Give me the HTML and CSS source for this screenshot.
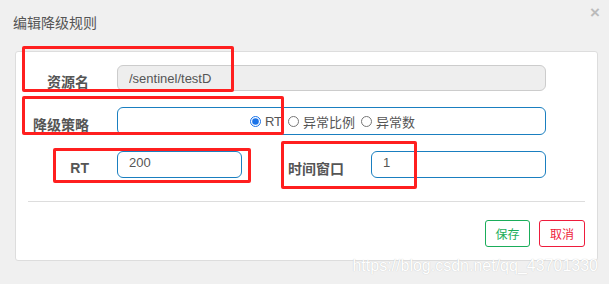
FILE: index.html
```html
<!DOCTYPE html>
<html lang="zh">
<head>
<meta charset="UTF-8" />
<title>编辑降级规则</title>
<link rel="stylesheet" href="styles.css">
</head>
<body>

<div class="dialog">
  <div class="dialog-head">
    <span class="dialog-title">编辑降级规则</span>
    <span class="close">×</span>
  </div>

  <div class="panel">
    <div class="row">
      <label class="label">资源名</label>
      <input class="input input-wide" type="text" value="/sentinel/testD" disabled />
    </div>

    <div class="row">
      <label class="label">降级策略</label>
      <div class="radio-box">
        <label class="radio"><input type="radio" name="grade" checked /> RT</label>
        <label class="radio"><input type="radio" name="grade" /> 异常比例</label>
        <label class="radio"><input type="radio" name="grade" /> 异常数</label>
      </div>
    </div>

    <div class="row">
      <label class="label">RT</label>
      <input class="input input-short" type="text" value="200" />
      <label class="label label-second">时间窗口</label>
      <input class="input input-mid" type="text" value="1" />
    </div>

    <div class="divider"></div>

    <div class="buttons">
      <button class="btn btn-save">保存</button>
      <button class="btn btn-cancel">取消</button>
    </div>
  </div>
</div>

<!-- красные рамки поверх скриншота -->
<div class="mark mark-1"></div>
<div class="mark mark-2"></div>
<div class="mark mark-3"></div>
<div class="mark mark-4"></div>

<div class="watermark">https://blog.csdn.net/qq_43701330</div>

</body>
</html>
```

FILE: styles.css
```css
* {
    margin: 0;
    padding: 0;
    box-sizing: border-box;
}

body {
    font-family: 'Liberation Sans', 'Noto Sans CJK SC', sans-serif;
    background: #f0f0f0;
    width: 609px;
    height: 284px;
    position: relative;
    overflow: hidden;
}

/* Заголовок диалога */
.dialog-head {
    height: 51px;
    display: flex;
    justify-content: space-between;
    align-items: flex-start;
    padding: 14px 9px 0 13px;
}
.dialog-title {
    font-size: 14px;
    color: #555;
    line-height: 18px;
}
.close {
    font-size: 17px;
    font-weight: bold;
    color: #bbb;
    line-height: 12px;
    margin-top: -7px;
}

/* Панель формы */
.panel {
    margin-left: 15px;
    width: 583px;
    height: 210px;
    background: #fff;
    border: 1px solid #ddd;
    border-radius: 3px;
    padding-top: 13px;
}
.row {
    display: flex;
    align-items: center;
    margin-bottom: 16px;
}
.label {
    width: 73px;
    text-align: right;
    font-size: 14px;
    font-weight: bold;
    color: #555;
    padding-top: 6px;
    margin-right: 28px;
}
.label-second {
    width: 102px;
    margin-right: 27px;
}
.input {
    height: 27px;
    border: 1px solid #1a7fc0;
    border-radius: 6px;
    padding: 0 11px 4px;
    font-family: 'Liberation Sans', sans-serif;
    font-size: 13px;
    color: #555;
    background: #fff;
    outline: none;
}
.input-wide {
    width: 429px;
    height: 26px;
    background: #eee;
    border-color: #ccc;
    color: #555;
    padding-bottom: 0;
}
.input-short {
    width: 125px;
}
.input-mid {
    width: 175px;
}

.radio-box {
    width: 429px;
    height: 28px;
    border: 1px solid #1a7fc0;
    border-radius: 6px;
    display: flex;
    justify-content: center;
    align-items: center;
    gap: 6px;
    padding-left: 2px;
}
.radio {
    font-size: 13px;
    color: #555;
    display: flex;
    align-items: center;
    font-weight: normal;
}
.radio input {
    width: 11px;
    height: 11px;
    margin: 0 4px 0 0;
    accent-color: #1a73e8;
}

/* margin-top схлопывается с отступом последней строки */
.divider {
    margin: 23px 12px 0 12px;
    border-top: 1px solid #ddd;
}

.buttons {
    display: flex;
    justify-content: flex-end;
    gap: 9px;
    padding: 18px 12px 0 0;
}
.btn {
    height: 27px;
    padding: 0 8px;
    background: #fff;
    border-radius: 3px;
    font-family: 'Noto Sans CJK SC', sans-serif;
    font-size: 12px;
    cursor: pointer;
}
.btn-save {
    width: 45px;
    border: 1px solid #1aad5a;
    color: #1aad5a;
}
.btn-cancel {
    width: 46px;
    border: 1px solid #ee1c3c;
    color: #ee1c3c;
}

/* Красные рамки аннотаций */
.mark {
    position: absolute;
    border: 3px solid #ff1f1f;
    border-radius: 2px;
}
.mark-1 { left: 22px; top: 46px; width: 212px; height: 46px; }
.mark-2 { left: 22px; top: 96px; width: 262px; height: 39px; }
.mark-3 { left: 53px; top: 148px; width: 198px; height: 35px; }
.mark-4 { left: 281px; top: 141px; width: 136px; height: 48px; }

/* Водяной знак */
.watermark {
    position: absolute;
    right: 11px;
    top: 257px;
    font-family: 'Liberation Sans', sans-serif;
    font-size: 16px;
    color: #fff;
    text-shadow: 0 0 1px #bbb;
}
```
